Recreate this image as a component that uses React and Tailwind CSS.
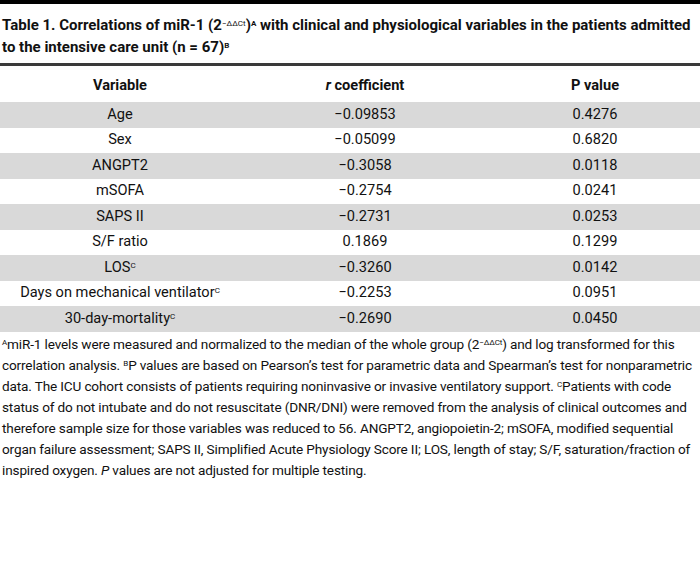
const rows = [
  { v: "Age", r: "−0.09853", p: "0.4276" },
  { v: "Sex", r: "−0.05099", p: "0.6820" },
  { v: "ANGPT2", r: "−0.3058", p: "0.0118" },
  { v: "mSOFA", r: "−0.2754", p: "0.0241" },
  { v: "SAPS II", r: "−0.2731", p: "0.0253" },
  { v: "S/F ratio", r: "0.1869", p: "0.1299" },
  { v: "LOS", sup: "C", r: "−0.3260", p: "0.0142" },
  { v: "Days on mechanical ventilator", sup: "C", r: "−0.2253", p: "0.0951" },
  { v: "30-day-mortality", sup: "C", r: "−0.2690", p: "0.0450" },
];

export default function App() {
  return (
    <div className="w-[700px] h-[568px] overflow-hidden bg-white text-[#111] font-['Roboto',sans-serif]">
      <div className="h-[4px] bg-black" />
      <h1 className="px-[2px] pt-[10px] text-[15px] leading-[22px] font-bold whitespace-nowrap">
        Table 1. Correlations of miR-1 (2<sup className="text-[8px] font-normal">−ΔΔCt</sup>)<sup className="text-[8px]">A</sup> with clinical and physiological variables in the patients admitted
        <br />
        to the intensive care unit (n = 67)<sup className="text-[8px]">B</sup>
      </h1>
      <div className="mt-[5px] h-[3px] bg-[#3a3a3a]" />
      <table className="w-full text-[14.6px] text-center border-collapse">
        <thead>
          <tr className="h-[36px] font-bold">
            <th className="w-[240px] pt-[4px]">Variable</th>
            <th className="w-[250px] pt-[4px]"><i>r</i> coefficient</th>
            <th className="pt-[4px]">P value</th>
          </tr>
        </thead>
        <tbody>
          {rows.map((row, i) => (
            <tr key={row.v} className={i % 2 === 0 ? "h-[25.5px] bg-[#d9d9d9]" : "h-[25.5px] bg-white"}>
              <td>
                {row.v}
                {row.sup && <sup className="text-[8px]">{row.sup}</sup>}
              </td>
              <td>{row.r}</td>
              <td>{row.p}</td>
            </tr>
          ))}
        </tbody>
      </table>
      <p className="px-[2px] pt-[2px] text-[13.6px] leading-[21px] tracking-[-0.15px] whitespace-nowrap">
        <sup className="text-[8px]">A</sup>miR-1 levels were measured and normalized to the median of the whole group (2<sup className="text-[8px]">−ΔΔCt</sup>) and log transformed for this
        <br />
        correlation analysis. <sup className="text-[8px]">B</sup>P values are based on Pearson’s test for parametric data and Spearman’s test for nonparametric
        <br />
        data. The ICU cohort consists of patients requiring noninvasive or invasive ventilatory support. <sup className="text-[8px]">C</sup>Patients with code
        <br />
        status of do not intubate and do not resuscitate (DNR/DNI) were removed from the analysis of clinical outcomes and
        <br />
        therefore sample size for those variables was reduced to 56. ANGPT2, angiopoietin-2; mSOFA, modified sequential
        <br />
        organ failure assessment; SAPS II, Simplified Acute Physiology Score II; LOS, length of stay; S/F, saturation/fraction of
        <br />
        inspired oxygen. <i>P</i> values are not adjusted for multiple testing.
      </p>
    </div>
  );
}
